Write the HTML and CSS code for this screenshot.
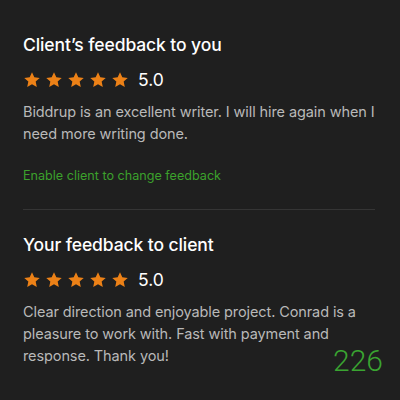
FILE: index.html
```html
<html lang="en">
<head>
  <meta charset="UTF-8">
  <meta name="viewport" content="width=device-width, initial-scale=1.0">
  <title>Feedback</title>
  <link rel="stylesheet" href="styles.css">
</head>
<body>
  <div class="page">
    <section class="block">
      <h2 class="title">Client’s feedback to you</h2>
      <div class="rating">
        <span class="stars">
          <svg viewBox="0 0 24 24"><path d="M12 1.8l3.1 6.6 7.2.8-5.4 4.9 1.5 7.1L12 17.6l-6.4 3.6 1.5-7.1-5.4-4.9 7.2-.8z"/></svg>
          <svg viewBox="0 0 24 24"><path d="M12 1.8l3.1 6.6 7.2.8-5.4 4.9 1.5 7.1L12 17.6l-6.4 3.6 1.5-7.1-5.4-4.9 7.2-.8z"/></svg>
          <svg viewBox="0 0 24 24"><path d="M12 1.8l3.1 6.6 7.2.8-5.4 4.9 1.5 7.1L12 17.6l-6.4 3.6 1.5-7.1-5.4-4.9 7.2-.8z"/></svg>
          <svg viewBox="0 0 24 24"><path d="M12 1.8l3.1 6.6 7.2.8-5.4 4.9 1.5 7.1L12 17.6l-6.4 3.6 1.5-7.1-5.4-4.9 7.2-.8z"/></svg>
          <svg viewBox="0 0 24 24"><path d="M12 1.8l3.1 6.6 7.2.8-5.4 4.9 1.5 7.1L12 17.6l-6.4 3.6 1.5-7.1-5.4-4.9 7.2-.8z"/></svg>
        </span>
        <span class="score">5.0</span>
      </div>
      <p class="text">Biddrup is an excellent writer. I will hire again when I need more writing done.</p>
      <a class="link" href="#">Enable client to change feedback</a>
    </section>
    <hr class="divider">
    <section class="block">
      <h2 class="title">Your feedback to client</h2>
      <div class="rating">
        <span class="stars">
          <svg viewBox="0 0 24 24"><path d="M12 1.8l3.1 6.6 7.2.8-5.4 4.9 1.5 7.1L12 17.6l-6.4 3.6 1.5-7.1-5.4-4.9 7.2-.8z"/></svg>
          <svg viewBox="0 0 24 24"><path d="M12 1.8l3.1 6.6 7.2.8-5.4 4.9 1.5 7.1L12 17.6l-6.4 3.6 1.5-7.1-5.4-4.9 7.2-.8z"/></svg>
          <svg viewBox="0 0 24 24"><path d="M12 1.8l3.1 6.6 7.2.8-5.4 4.9 1.5 7.1L12 17.6l-6.4 3.6 1.5-7.1-5.4-4.9 7.2-.8z"/></svg>
          <svg viewBox="0 0 24 24"><path d="M12 1.8l3.1 6.6 7.2.8-5.4 4.9 1.5 7.1L12 17.6l-6.4 3.6 1.5-7.1-5.4-4.9 7.2-.8z"/></svg>
          <svg viewBox="0 0 24 24"><path d="M12 1.8l3.1 6.6 7.2.8-5.4 4.9 1.5 7.1L12 17.6l-6.4 3.6 1.5-7.1-5.4-4.9 7.2-.8z"/></svg>
        </span>
        <span class="score">5.0</span>
      </div>
      <div class="last">
        <span class="text">Clear direction and enjoyable project. Conrad is a pleasure to work with. Fast with payment and response. Thank you!</span>
        <!-- word counter sits over the corner of the comment -->
        <span class="count">226</span>
      </div>
    </section>
  </div>
</body>
</html>
```
FILE: styles.css
```css
* {
  padding: 0;
  margin: 0;
  box-sizing: border-box;
}
html, body {
  width: 400px;
  height: 400px;
  background-color: #1f1f1f;
  overflow: hidden;
}
body {
  font-family: Inter, "Liberation Sans", sans-serif;
  color: #fff;
}
.page {
  padding: 34px 25px 0 23px;
}
.title {
  font-size: 17.5px;
  font-weight: 500;
  line-height: 22px;
  letter-spacing: -0.1px;
}
.rating {
  display: flex;
  align-items: center;
  gap: 9px;
  margin-top: 12px;
  height: 24px;
}
.stars {
  display: flex;
  gap: 4px;
}
.stars svg {
  width: 18px;
  height: 18px;
  fill: #ec8117;
}
.score {
  font-size: 17.5px;
  line-height: 22px;
}
.text {
  margin-top: 9px;
  font-size: 14.5px;
  line-height: 22px;
  color: #b9b9b9;
  letter-spacing: -0.1px;
}
.link {
  display: block;
  margin-top: 22px;
  font-size: 12.6px;
  line-height: 18px;
  color: #3ca12c;
  text-decoration: none;
}
.divider {
  border: 0;
  border-top: 1px solid #353535;
  margin: 24px 0 24px;
}
.last {
  position: relative;
  margin-top: 9px;
  font-size: 14.5px;
  line-height: 22px;
}
.last .text {
  margin-top: 0;
}
.count {
  position: absolute;
  top: 45px;
  right: -8px;
  font-family: Roboto, sans-serif;
  font-weight: 300;
  font-size: 30px;
  line-height: 30px;
  color: #3aa431;
}
```
